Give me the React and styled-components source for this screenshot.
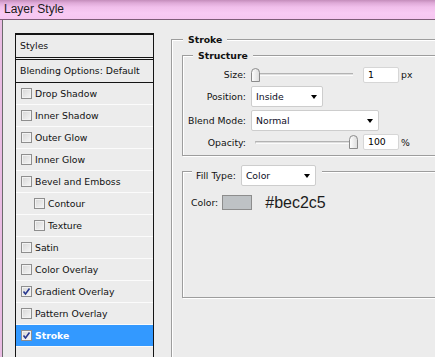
import React from "react";
import styled, { createGlobalStyle } from "styled-components";

const GlobalStyle = createGlobalStyle`
  html, body {
    margin: 0;
    padding: 0;
    background: #ececec;
    overflow: hidden;
  }
`;

const UI_FONT = `"DejaVu Sans", "Liberation Sans", sans-serif`;

const effects = [
  { name: "Drop Shadow" },
  { name: "Inner Shadow" },
  { name: "Outer Glow" },
  { name: "Inner Glow" },
  { name: "Bevel and Emboss" },
  { name: "Contour", indent: true },
  { name: "Texture", indent: true },
  { name: "Satin" },
  { name: "Color Overlay" },
  { name: "Gradient Overlay", checked: true },
  { name: "Pattern Overlay" },
  { name: "Stroke", checked: true, selected: true },
];

function Checkbox({ checked }) {
  return (
    <Box>
      {checked && (
        <svg width="9" height="9" viewBox="0 0 9 9">
          <path d="M1.5 4.5 L3.5 7 L7.5 1.5" fill="none" stroke="#27378f" strokeWidth="1.6" />
        </svg>
      )}
    </Box>
  );
}

function Slider({ value }) {
  return (
    <SliderWrap>
      <Track />
      <Thumb style={{ left: `${value * 98}px` }}>
        <svg width="9" height="14" viewBox="0 0 9 14">
          <defs>
            <linearGradient id="th" x1="0" y1="0" x2="1" y2="0">
              <stop offset="0" stopColor="#ffffff" />
              <stop offset="1" stopColor="#dcdcdc" />
            </linearGradient>
          </defs>
          <path d="M0.5 4.5 Q0.5 0.5 4.5 0.5 Q8.5 0.5 8.5 4.5 L8.5 13.5 L0.5 13.5 Z" fill="url(#th)" stroke="#8b8b8b" />
        </svg>
      </Thumb>
    </SliderWrap>
  );
}

function Dropdown({ width, children }) {
  return (
    <Select $w={width}>
      <span>{children}</span>
      <Arrow />
    </Select>
  );
}

export default function App() {
  return (
    <Window>
      <GlobalStyle />
      <TitleBar>Layer Style</TitleBar>
      <Frame>
        <StylesPanel>
          <PanelHeader>Styles</PanelHeader>
          <BlendRow>Blending Options: Default</BlendRow>
          {effects.map((e) => (
            <EffectRow key={e.name} $indent={e.indent} $selected={e.selected}>
              <Checkbox checked={e.checked} />
              <span>{e.name}</span>
            </EffectRow>
          ))}
        </StylesPanel>

        <StrokeGroup>
          <Legend $left={11} $top={-6}>Stroke</Legend>
          <Structure>
            <Legend $left={10} $top={-6}>Structure</Legend>
            <Field $h={17}>
              <Label>Size:</Label>
              <Slider value={0} />
              <NumInput>1</NumInput>
              <Unit>px</Unit>
            </Field>
            <Field $h={21}>
              <Label>Position:</Label>
              <Dropdown width={72}>Inside</Dropdown>
            </Field>
            <Field $h={21}>
              <Label>Blend Mode:</Label>
              <Dropdown width={128}>Normal</Dropdown>
            </Field>
            <Field $h={16}>
              <Label>Opacity:</Label>
              <Slider value={1} />
              <NumInput>100</NumInput>
              <Unit>%</Unit>
            </Field>
          </Structure>

          <FillGroup>
            <FillLegend>
              <span>Fill Type:</span>
              <Dropdown width={75}>Color</Dropdown>
            </FillLegend>
            <ColorRow>
              <span>Color:</span>
              <Swatch />
              <Hex>#bec2c5</Hex>
            </ColorRow>
          </FillGroup>
        </StrokeGroup>
      </Frame>
    </Window>
  );
}

const Window = styled.div`
  width: 435px;
  height: 357px;
  display: flex;
  flex-direction: column;
  overflow: hidden;
  background: #ececec;
  font-family: ${UI_FONT};
  font-size: 9.3px;
  color: #111;
`;

const TitleBar = styled.div`
  flex: none;
  height: 20px;
  box-sizing: border-box;
  padding: 1px 0 0 4px;
  border-bottom: 1px solid #7d5b77;
  background: linear-gradient(
    to bottom,
    #c48dbb 0px,
    #dfaad8 3px,
    #f1bfeb 7px,
    #f8caf3 13px,
    #f6c6f0 19px
  );
  font: 12px/16px "Liberation Sans", Arial, sans-serif;
  color: #1b1b1b;
`;

const Frame = styled.div`
  flex: 1;
  min-height: 0;
  display: flex;
  align-items: stretch;
  overflow: hidden;
  border-left: 2px solid #e9bce3;
  box-shadow: inset 1px 0 0 #6b6b6b;
`;

const StylesPanel = styled.div`
  flex: none;
  width: 139px;
  box-sizing: border-box;
  margin: 13px 0 -20px 13px;
  border: 1px solid #141414;
  border-top-width: 2px;
`;

const PanelHeader = styled.div`
  height: 22px;
  line-height: 22px;
  padding-left: 4px;
  border-bottom: 3px double #141414;
`;

const BlendRow = styled.div`
  height: 22px;
  line-height: 22px;
  padding-left: 4px;
  border-bottom: 1px solid #141414;
`;

const EffectRow = styled.div`
  display: flex;
  align-items: center;
  gap: 3px;
  height: 21px;
  padding-left: ${(p) => (p.$indent ? 18 : 5)}px;
  border-bottom: 1px solid #fbfbfb;
  background: ${(p) => (p.$selected ? "#3399ff" : "transparent")};
  color: ${(p) => (p.$selected ? "#fff" : "#111")};
  font-weight: ${(p) => (p.$selected ? "bold" : "normal")};
`;

const Box = styled.div`
  flex: none;
  width: 11px;
  height: 11px;
  box-sizing: border-box;
  display: flex;
  align-items: center;
  justify-content: center;
  border: 1px solid #8e8e8e;
  background: linear-gradient(135deg, #d6d6d6, #f6f6f6);
  box-shadow: inset 0 0 0 1px #f2f2f2;
`;

const etched = `
  border: 1px solid #9d9d9d;
  box-shadow: inset 1px 1px 0 #ffffff, 1px 1px 0 #ffffff;
`;

const StrokeGroup = styled.div`
  position: relative;
  flex: none;
  width: 330px;
  box-sizing: border-box;
  margin: 19px 0 -20px 17px;
  padding: 15px 0 0 10px;
  ${etched}
`;

const Legend = styled.div`
  position: absolute;
  top: ${(p) => p.$top}px;
  left: ${(p) => p.$left}px;
  padding: 0 5px;
  line-height: 12px;
  font-weight: bold;
  background: #ececec;
`;

const Structure = styled.div`
  position: relative;
  display: flex;
  flex-direction: column;
  gap: 3px;
  padding: 10px 0 5px 0;
  ${etched}
`;

const Field = styled.div`
  display: flex;
  align-items: center;
  height: ${(p) => p.$h}px;
  &:first-of-type {
    margin-bottom: 0;
  }
`;

const Label = styled.span`
  flex: none;
  width: 63px;
  margin-right: 5px;
  text-align: right;
`;

const SliderWrap = styled.div`
  position: relative;
  flex: none;
  width: 106px;
  height: 16px;
  display: flex;
  align-items: center;
`;

const Track = styled.div`
  flex: 1;
  margin: 0 4px;
  height: 3px;
  box-sizing: border-box;
  border-top: 1px solid #b3b3b3;
  border-left: 1px solid #c4c4c4;
  border-bottom: 1px solid #fbfbfb;
  background: #dedede;
`;

const Thumb = styled.div`
  position: absolute;
  top: 1px;
  width: 9px;
  height: 14px;
  display: flex;
`;

const NumInput = styled.div`
  flex: none;
  width: 36px;
  height: 16px;
  box-sizing: border-box;
  margin-left: 6px;
  padding-left: 4px;
  border: 1px solid #d6d6d6;
  border-radius: 2px;
  background: #fff;
  line-height: 14px;
  color: #000;
`;

const Unit = styled.span`
  margin-left: 2px;
`;

const Select = styled.div`
  flex: none;
  width: ${(p) => p.$w}px;
  height: 21px;
  box-sizing: border-box;
  display: flex;
  align-items: center;
  justify-content: space-between;
  padding: 0 5px 0 4px;
  border: 1px solid #cdcdcd;
  border-radius: 2px;
  background: #fff;
  color: #0c0c1e;
  font-weight: normal;
`;

const Arrow = styled.span`
  width: 0;
  height: 0;
  border-left: 3.5px solid transparent;
  border-right: 3.5px solid transparent;
  border-top: 4px solid #000;
`;

const FillGroup = styled.div`
  position: relative;
  height: 127px;
  box-sizing: border-box;
  margin-top: 15px;
  padding: 23px 0 0 8px;
  ${etched}
`;

const FillLegend = styled.div`
  position: absolute;
  top: -7px;
  left: 9px;
  display: flex;
  align-items: center;
  gap: 5px;
  padding: 0 6px 0 4px;
  background: #ececec;
`;

const ColorRow = styled.div`
  display: flex;
  align-items: center;
  height: 15px;
`;

const Swatch = styled.div`
  width: 30px;
  height: 15px;
  box-sizing: border-box;
  margin-left: 4px;
  border: 1px solid #8d8d8d;
  background: #bec2c5;
`;

const Hex = styled.span`
  margin-left: 13px;
  font: 16px/18px "Liberation Sans", Arial, sans-serif;
  color: #1c1c1c;
`;
